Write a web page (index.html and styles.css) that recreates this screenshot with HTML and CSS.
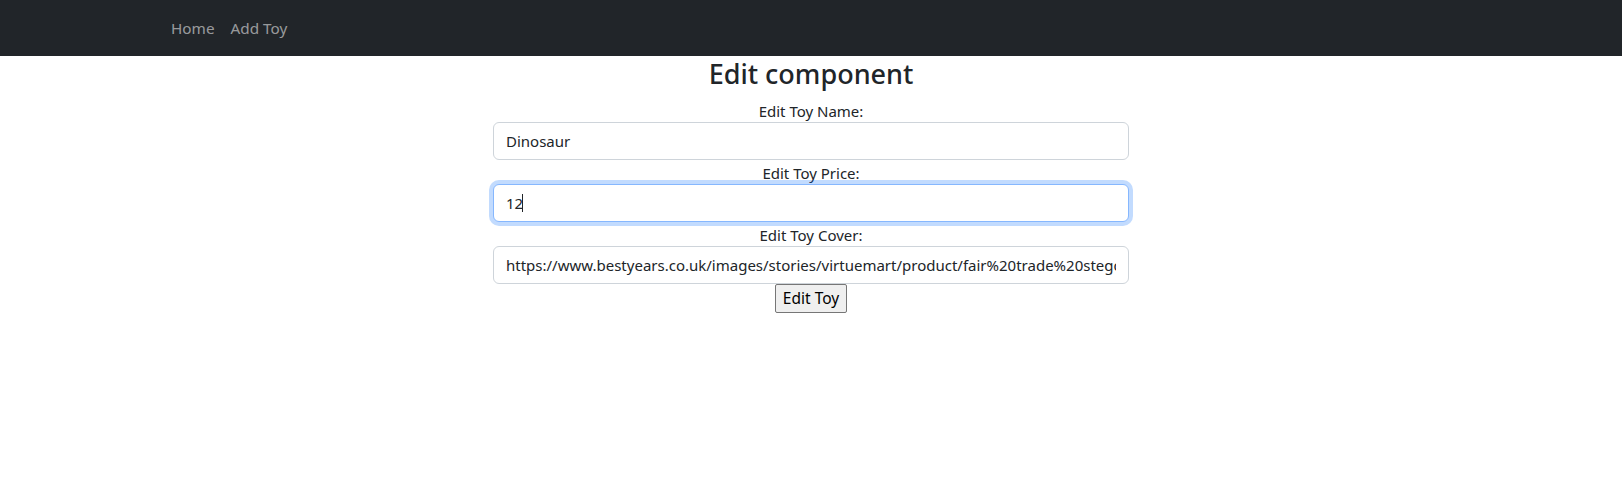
FILE: index.html
```html
<!DOCTYPE html>
<html lang="en">
<head>
<meta charset="utf-8">
<title>Edit component</title>
<link rel="stylesheet" href="styles.css">
</head>
<body>
<nav class="navbar">
  <div class="container nav-inner">
    <a class="nav-link" href="#">Home</a>
    <a class="nav-link" href="#">Add Toy</a>
  </div>
</nav>
<main class="container">
  <h3 class="title">Edit component</h3>
  <div class="row">
    <form class="col">
      <label class="label" for="name">Edit Toy Name:</label>
      <input class="form-control" id="name" type="text" value="Dinosaur">
      <label class="label" for="price">Edit Toy Price:</label>
      <div class="field-wrap">
        <input class="form-control focused" id="price" type="text" value="12">
        <span class="caret"></span>
      </div>
      <label class="label" for="cover">Edit Toy Cover:</label>
      <input class="form-control" id="cover" type="text" value="https://www.bestyears.co.uk/images/stories/virtuemart/product/fair%20trade%20stegosaurus.jpg">
      <div class="actions"><button class="btn" type="button">Edit Toy</button></div>
    </form>
  </div>
</main>
</body>
</html>
```
FILE: styles.css
```css
* { box-sizing: border-box; }
html, body {
  margin: 0;
  font-family: "Noto Sans", "Open Sans", "Liberation Sans", sans-serif;
  font-size: 16px;
  line-height: 1.5;
  color: #212529;
  background: #fff;
}
.container {
  width: 1320px;
  margin: 0 auto;
  padding: 0 12px;
}
.navbar {
  background: #212529;
  padding: 8px 0;
}
.nav-inner {
  display: flex;
}
.nav-link {
  display: block;
  padding: 8px 8px;
  color: rgba(255, 255, 255, 0.55);
  text-decoration: none;
  font-size: 15.3px;
  line-height: 24px;
}
.title {
  margin: 0 0 8px;
  padding-top: 2px;
  font-size: 27px;
  font-weight: 500;
  line-height: 1.2;
  text-align: center;
}
.row {
  display: flex;
  justify-content: center;
}
.col {
  width: 660px;
  padding: 0 12px;
  display: flex;
  flex-direction: column;
  margin: 0;
}
.label {
  display: block;
  text-align: center;
  font-size: 15px;
  line-height: 24px;
  padding-top: 1px;
  margin-bottom: -1px;
}
.field-wrap {
  position: relative;
}
.form-control {
  display: block;
  width: 100%;
  height: 38px;
  padding: 6px 12px;
  font-family: inherit;
  font-size: 15px;
  line-height: 24px;
  color: #212529;
  background: #fff;
  border: 1px solid #ced4da;
  border-radius: 6px;
  outline: none;
}
.form-control.focused {
  border-color: #86b7fe;
  box-shadow: 0 0 0 4px rgba(13, 110, 253, 0.25);
}
.caret {
  position: absolute;
  left: 29px;
  top: 10px;
  width: 1px;
  height: 18px;
  background: #212529;
}
.actions {
  display: flex;
  justify-content: center;
}
.btn {
  font-family: inherit;
  font-size: 15.5px;
  line-height: 25px;
  padding: 1px 7px;
  color: #000;
  background: #efefef;
  border: 1px solid #767676;
  border-radius: 2px;
}
```
